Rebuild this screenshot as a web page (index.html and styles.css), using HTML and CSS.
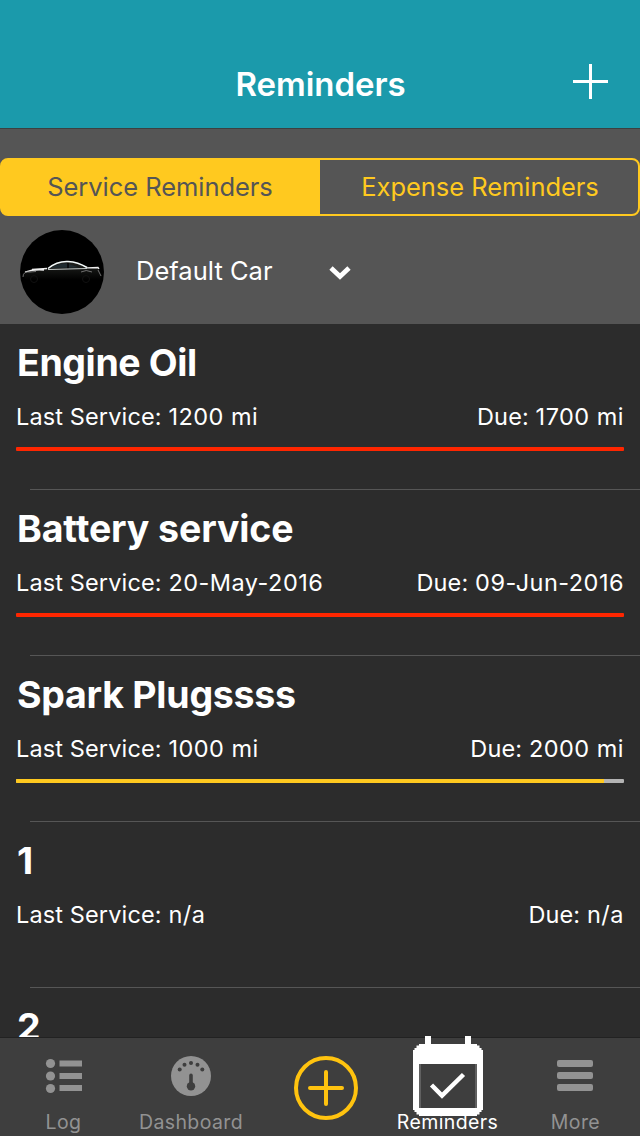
FILE: index.html
```html
<!DOCTYPE html>
<html lang="en">
<head>
<meta charset="utf-8">
<title>Reminders</title>
<link rel="stylesheet" href="styles.css">
</head>
<body>
<div class="app">
  <header class="navbar">
    <h1 class="navbar-title">Reminders</h1>
    <svg class="add" width="36" height="36" viewBox="0 0 36 36"><path d="M0 17.5H35M17.5 0V35" stroke="#fff" stroke-width="3"/></svg>
  </header>
  <section class="filters">
    <div class="segments">
      <div class="segment active"><span>Service Reminders</span></div>
      <div class="segment"><span>Expense Reminders</span></div>
    </div>
    <div class="vehicle">
      <svg class="avatar" width="84" height="84" viewBox="0 0 84 84">
        <defs><linearGradient id="body" x1="0" y1="0" x2="0" y2="1"><stop offset="0" stop-color="#222421"/><stop offset="1" stop-color="#000"/></linearGradient></defs>
        <circle cx="42" cy="42" r="42"/>
        <path d="M3 45Q5 41 14 40L27 38.500Q38 31 50 32Q60 33 67 38L78 38L82 46L80 50L6 50Z" fill="url(#body)"/>
        <path d="M31 38Q38 33 47 33.500L59 37.500Z" fill="#202b30"/>
        <path d="M48 33V39" stroke="#050505" stroke-width="1.500"/>
        <path d="M28 38.500Q37 31 48 31.500Q58 32 67 37.500" fill="none" stroke="#f4fafa" stroke-width="1.600"/>
        <path d="M28 39.500L67 38.500" stroke="#c5cbca" stroke-width="1"/>
        <path d="M12 39.500L27 38.500M5 42Q14 39 24 40M67 37.800L78 37.500L79 39" fill="none" stroke="#eee" stroke-width="1.300"/>
        <path d="M3 47Q3 41 10 42L16 41.500M61 42Q66 39 72 42M78 40L81 46" fill="none" stroke="#888" stroke-width=".8"/>
        <g fill="none" stroke="#111"><circle cx="14" cy="49" r="3.500"/><circle cx="66" cy="49" r="3.500"/></g>
      </svg>
      <span class="vehicle-name">Default Car</span>
      <svg class="chevron" width="22" height="16" viewBox="0 0 22 16"><path d="M2 3L11 11.500L20 3" fill="none" stroke="#fff" stroke-width="4.800"/></svg>
    </div>
  </section>
  <main class="list">
    <article class="item">
      <h2 class="t-oil">Engine Oil</h2>
      <div class="details"><div><span class="key">Last Service: </span>1200 mi</div><div><span class="key">Due: </span>1700 mi</div></div>
      <div class="bar"><div class="fill overdue"></div></div>
    </article>
    <article class="item">
      <h2 class="t-battery">Battery service</h2>
      <div class="details"><div><span class="key">Last Service: </span>20-May-2016</div><div><span class="key">Due: </span>09-Jun-2016</div></div>
      <div class="bar"><div class="fill overdue"></div></div>
    </article>
    <article class="item">
      <h2 class="t-plugs">Spark Plugssss</h2>
      <div class="details"><div><span class="key">Last Service: </span>1000 mi</div><div><span class="key">Due: </span>2000 mi</div></div>
      <div class="bar"><div class="fill upcoming"></div></div>
    </article>
    <article class="item">
      <h2>1</h2>
      <div class="details"><div><span class="key">Last Service: </span>n/a</div><div><span class="key">Due: </span>n/a</div></div>
    </article>
    <article class="item">
      <h2>2</h2>
    </article>
  </main>
  <nav class="tabs">
    <div class="tab">
      <svg width="40" height="40" viewBox="0 0 40 40" fill="#929292"><circle cx="6.500" cy="7.500" r="4.600"/><circle cx="6.500" cy="20" r="4.600"/><circle cx="6.500" cy="32.500" r="4.600"/><path d="M15.500 4.500H38V10.500H15.500ZM15.500 17H38V23H15.500ZM15.500 29H38V35H15.500Z"/></svg>
      <span class="label">Log</span>
    </div>
    <div class="tab">
      <svg width="40" height="40" viewBox="0 0 40 40"><circle cx="20" cy="20" r="20" fill="#929292"/><g fill="#3e3e3e"><circle cx="8.700" cy="13.500" r="2"/><circle cx="13.500" cy="8.800" r="2"/><circle cx="20" cy="7" r="2"/><circle cx="26.500" cy="8.800" r="2"/><circle cx="31.300" cy="13.500" r="2"/><circle cx="20" cy="30.300" r="4.200"/><path d="M18.200 28V19.500Q18.200 17.500 20 17.500Q21.800 17.500 21.800 19.500V28Z"/></g></svg>
      <span class="label">Dashboard</span>
    </div>
    <div class="tab new">
      <svg width="64" height="64" viewBox="0 0 64 64" fill="none" stroke="#ffc30f" stroke-width="4"><circle cx="32" cy="32" r="30"/><path d="M16 32H48M32 16V48" stroke-linecap="round"/></svg>
    </div>
    <div class="tab current">
      <svg class="calendar" width="70" height="80" viewBox="0 0 70 80" fill="none" stroke="#fff"><path d="M15 0V10M55 0V10" stroke-width="6"/><path fill="#fff" stroke="none" fill-rule="evenodd" d="M6 8H64V9.500H66.500V12H68.500V14H70V74H68.500V76H66.500V78.500H64V80H6V78.500H3.500V76H1.500V74H0V14H1.500V12H3.500V9.500H6ZM6 28V72H64V28Z"/><path d="M7 28V72M63 28V72" stroke="#606060" stroke-width="2"/><path d="M18.500 49L29 59.500L50.500 38.500" stroke-width="4.500"/></svg>
      <span class="label">Reminders</span>
    </div>
    <div class="tab more">
      <svg width="40" height="40" viewBox="0 0 40 40" fill="#929292"><rect x="2" y="4" width="36" height="7" rx="2"/><rect x="2" y="16" width="36" height="7" rx="2"/><rect x="2" y="28" width="36" height="7" rx="2"/></svg>
      <span class="label">More</span>
    </div>
  </nav>
</div>
</body>
</html>
```

FILE: styles.css
```css
* { box-sizing: border-box; }
body { margin: 0; background: #2c2c2c; color: #fff; font-family: Inter, "Liberation Sans", sans-serif; }
h1, h2 { margin: 0; }
svg { display: block; flex: none; }
.app { width: 640px; height: 1136px; display: flex; flex-direction: column; overflow: hidden; }

.navbar { height: 129px; flex: none; background: #1b9aab; border-bottom: 1px solid #3c4041; display: grid; grid-template-columns: 1fr auto 1fr; align-items: start; padding: 64px 31px 0; }
.navbar-title { grid-column: 2; font-size: 33px; font-weight: 600; line-height: 40px; letter-spacing: -.05px; padding-left: 1px; white-space: nowrap; }
.add { justify-self: end; }

.filters { height: 195px; flex: none; background: #555; padding-top: 29px; }
.segments { height: 58px; display: flex; border: 2px solid #ffc91f; border-radius: 8px; background: linear-gradient(#ffc91f, #ffc91f) 0 0 / 320px 58px no-repeat border-box; }
.segment { flex: 1; text-align: center; color: #ffc91f; font-size: 25.5px; line-height: 54px; white-space: nowrap; letter-spacing: -.05px; }
.segment.active { color: #555; padding-right: 4px; }
.vehicle { display: flex; align-items: center; padding: 14px 20px 0; }
.vehicle-name { margin-left: 32px; width: 193px; font-size: 25.5px; line-height: 30px; padding-bottom: 3px; letter-spacing: .02px; white-space: nowrap; }
.chevron { margin-top: 2px; }

.list { flex: 1; min-height: 0; overflow: hidden; }
.item { height: 166px; padding: 15px 16px 0; background: linear-gradient(#565656, #565656) 30px 165px / 610px 1px no-repeat; }
.item h2 { padding-left: 1px; font-size: 37.500px; line-height: 48px; font-weight: 700; letter-spacing: -.25px; white-space: nowrap; }
.item .t-oil { letter-spacing: -.4px; }
.item .t-battery { letter-spacing: -.12px; }
.details { display: flex; justify-content: space-between; font-size: 23.500px; line-height: 30px; letter-spacing: .48px; margin-top: 15px; white-space: pre; }
.key { letter-spacing: .13px; }
.bar { height: 4px; margin-top: 15px; border-radius: 1px; background: #b3b3b3; overflow: hidden; }
.fill { height: 4px; }
.overdue { width: 100%; background: #ff2600; }
.upcoming { width: 588px; background: #ffc91f; }

.tabs { height: 99px; flex: none; background: #3e3e3e; border-top: 1px solid #222; display: grid; grid-template-columns: 127px 128px 142px 101px 1fr; }
.tab { display: flex; flex-direction: column; align-items: center; padding-top: 18px; color: #929292; }
.label { font-size: 19.500px; line-height: 24px; margin-top: 14px; letter-spacing: .4px; white-space: nowrap; }
.tab.current { color: #fff; padding-top: 0; }
.calendar { margin-top: -2px; }
.current .label { margin-top: -6px; }
.more { padding-left: 12px; }
.more .label { padding-left: 1px; }
```
